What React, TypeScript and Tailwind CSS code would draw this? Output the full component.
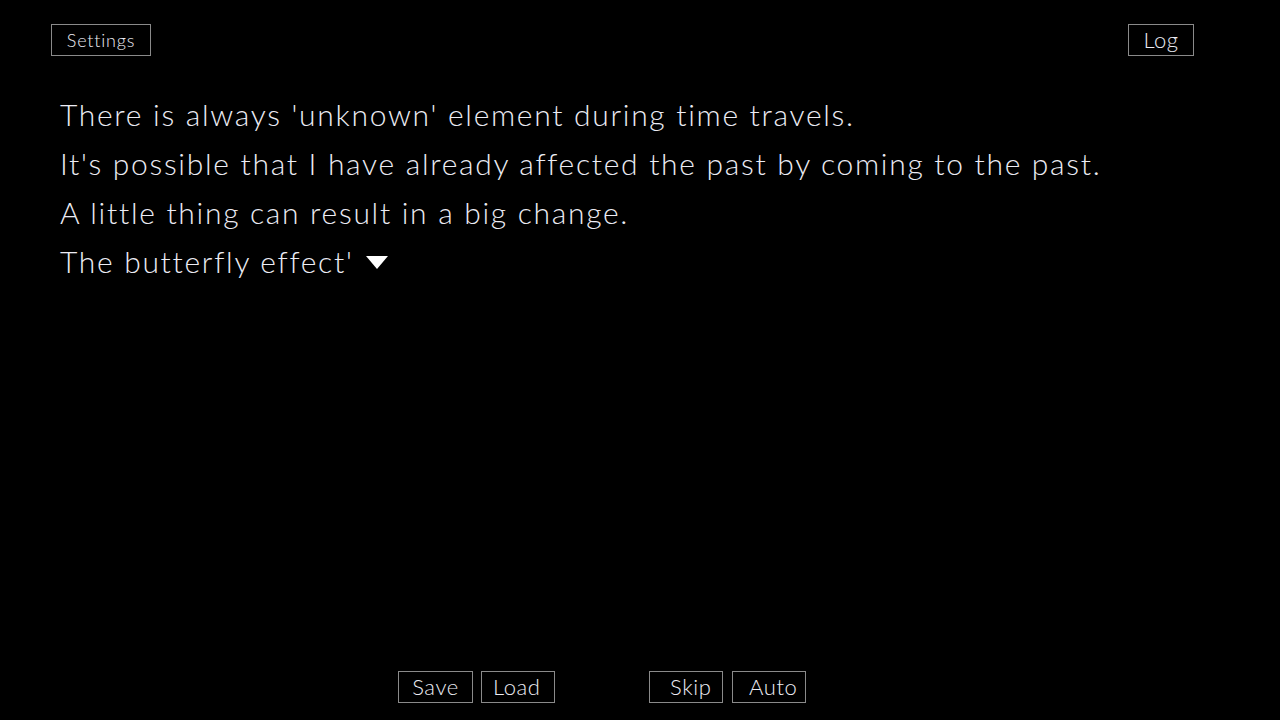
const lines = [
  "There is always 'unknown' element during time travels.",
  "It's possible that I have already affected the past by coming to the past.",
  "A little thing can result in a big change.",
];

function Btn({ label, className }: { label: string; className: string }) {
  return (
    <button
      className={`h-[32px] border border-[#8a8a8a] text-[#ececf4] flex items-center leading-none ${className}`}
    >
      {label}
    </button>
  );
}

export default function App() {
  return (
    <div
      className="w-[1280px] h-[720px] bg-black flex flex-col overflow-hidden"
      style={{ fontFamily: "Lato, 'Noto Sans', sans-serif" }}
    >
      <div className="flex justify-between pt-[24px] pl-[51px] pr-[86px]">
        <Btn label="Settings" className="w-[100px] justify-center text-[18px] font-light tracking-[0.8px]" />
        <Btn label="Log" className="w-[66px] justify-center text-[22px] font-light tracking-[0.5px]" />
      </div>

      <div className="flex-1 pl-[60px] pt-[34px] text-[30px] font-light text-[#ececf4] leading-[49px] tracking-[1.7px]">
        {lines.map((l) => (
          <p key={l}>{l}</p>
        ))}
        <p className="flex items-center">
          The butterfly effect'
          <svg width="22" height="13" viewBox="0 0 22 13" className="ml-[12px] mt-[2px]">
            <path d="M0 0h22L11 13z" fill="#ffffff" />
          </svg>
        </p>
      </div>

      <div className="flex pl-[398px] pb-[17px] text-[22px] font-light tracking-[0.6px]">
        <Btn label="Save" className="w-[75px] justify-center" />
        <Btn label="Load" className="w-[74px] ml-[8px] pl-[11px]" />
        <Btn label="Skip" className="w-[74px] ml-[94px] pl-[20px]" />
        <Btn label="Auto" className="w-[74px] ml-[9px] pl-[16px]" />
      </div>
    </div>
  );
}
